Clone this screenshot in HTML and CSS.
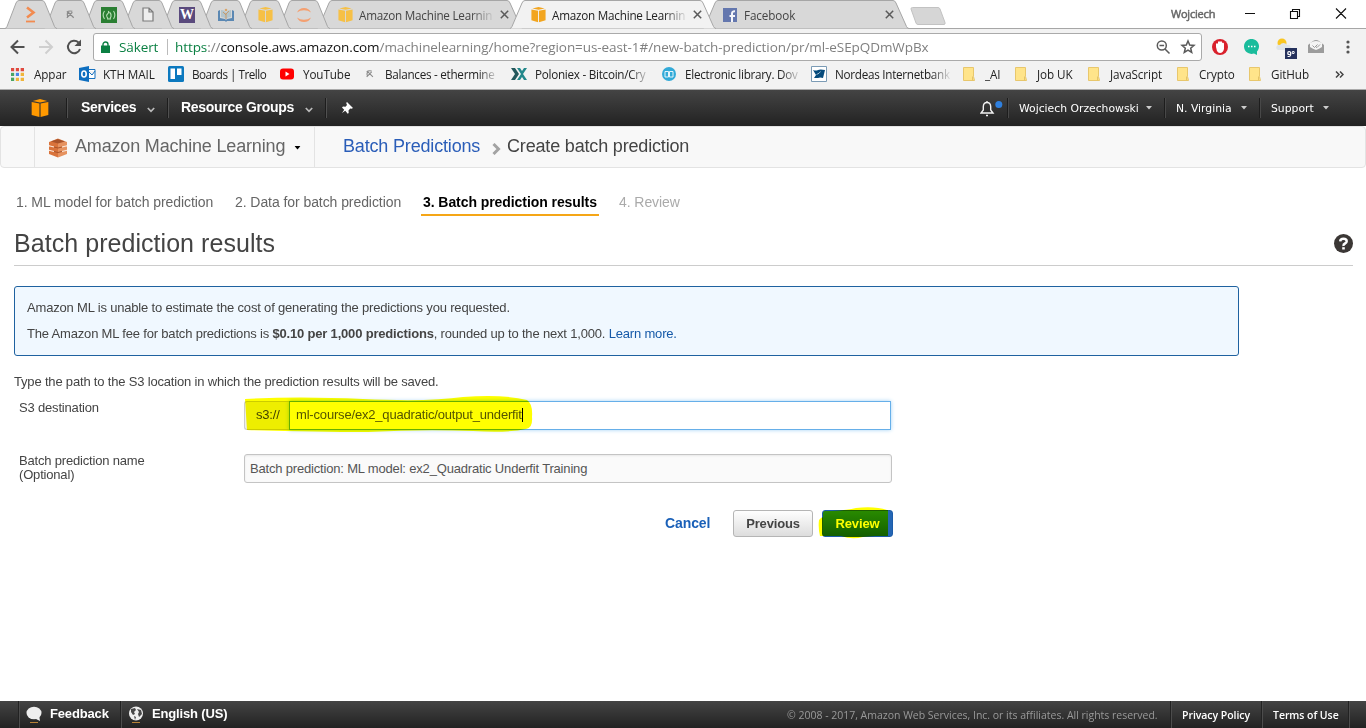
FILE: index.html
```html
<!DOCTYPE html>
<html lang="en">
<head>
<meta charset="utf-8">
<title>Amazon Machine Learning</title>
<link rel="stylesheet" href="styles.css">
</head>
<body>
<svg class="defs" width="0" height="0">
  <defs>
    <symbol id="tab-s" viewBox="0 0 52 29"><path d="M0 28.5Q1.500 28 2 26.500L11 3Q12 .5 14 .5H37Q39 .5 40 3L49.500 26.500Q50.500 28.500 52 28.500" stroke="#a6a6a6"/></symbol>
    <symbol id="tab-l" viewBox="0 0 206 29"><path d="M0 28.5Q1.500 28 2 26.500L12 3Q13 .5 15 .5H190Q192 .5 193 3L203.500 26.500Q204.500 28.500 206 28.500" stroke="#a6a6a6"/></symbol>
    <symbol id="cube" viewBox="0 0 18 18"><path d="M1.500 3.600 8.500 5V17.200L1.500 15.200zM16.500 3.600 9.500 5V17.200L16.500 15.200zM2.500 2.600 9 1l6.500 1.600L9 4z"/></symbol>
    <symbol id="pick" viewBox="0 0 12 12"><path d="M2 3.500Q4 1.500 8 2.500M3 3Q2 6 2.800 8M3.500 3.500 9.500 9.500M8 3.500 2 9.500" fill="none" stroke="#8a8a8a" stroke-width="1.300"/></symbol>
    <symbol id="folder" viewBox="0 0 13 14"><path d="M.5.500H10.500V9.500L11.500 13.500H.5z" fill="#ffe48a" stroke="#e8c76c"/><path d="M9.500 9.500v4" stroke="#e5c468"/></symbol>
    <symbol id="x" viewBox="0 0 9 9"><path d="M.8.800l7.400 7.400M8.200.800.8 8.200" stroke="#5a5a5a" stroke-width="1.500"/></symbol>
    <symbol id="chev" viewBox="0 0 8 6"><path d="M.8 1 4 4.300 7.200 1" fill="none" stroke="#bbb" stroke-width="1.700"/></symbol>
    <symbol id="tri" viewBox="0 0 6 4"><path d="M0 0h6L3 3.500z"/></symbol>
  </defs>
</svg>

<header class="chrome">
  <div class="tabs">
    <div class="tab small z9"><svg class="shape"><use href="#tab-s"/></svg><svg width="12" height="17" viewBox="0 0 12 17"><path d="M2 1.500 8.500 6.500 2 11.500" fill="none" stroke="#f28b50" stroke-width="2.600"/><path d="M1 15.500h9" stroke="#f28b50" stroke-width="1.800"/></svg></div>
    <div class="tab small z8"><svg class="shape"><use href="#tab-s"/></svg><svg width="11" height="11"><use href="#pick"/></svg></div>
    <div class="tab small z7"><svg class="shape"><use href="#tab-s"/></svg><svg width="16" height="16" viewBox="0 0 16 16"><path fill="#2b7f33" d="M0 0h16v16H0z"/><path d="M3.500 4Q.8 8 3.500 12M12.500 4q2.700 4 0 8M7.500 4Q8 6 6.500 7T6 10l1 1.500M8.500 5Q10.500 7 10 9.500L9 11.500M6 12h4" fill="none" stroke="#b8e0b6" stroke-width="1.100"/></svg></div>
    <div class="tab small z6"><svg class="shape"><use href="#tab-s"/></svg><svg width="12" height="15" viewBox="0 0 12 15"><path d="M1 1h6l4 4v9H1zM7 1v4h4" fill="#eee" stroke="#7b7b7b" stroke-width="1.200"/></svg></div>
    <div class="tab small z5"><svg class="shape"><use href="#tab-s"/></svg><span class="wicon">W</span></div>
    <div class="tab small z4"><svg class="shape"><use href="#tab-s"/></svg><svg width="16" height="14" viewBox="0 0 16 14"><path d="M0 3l2-1v8l5 1 1 1 1-1 5-1V2l2 1v10H9l-1 1-1-1H0z" fill="#5b88b3"/><path d="M3 2q4 0 5 3v6q-2-2-5-2zM13 2Q9 2 8 5v6q2-2 5-2z" fill="#b3c5cc"/><path d="M8 11V5M8 7 5 4M8 6l3-3" stroke="#c69a6c"/><circle cx="8" cy="2" r="1.300" fill="#d9a56b"/></svg></div>
    <div class="tab small z3"><svg class="shape"><use href="#tab-s"/></svg><svg class="cube-dim" width="17" height="17"><use href="#cube"/></svg></div>
    <div class="tab small z2"><svg class="shape"><use href="#tab-s"/></svg><svg width="16" height="16" viewBox="0 0 16 16"><path d="M1 5.500Q3 1 8 1T15 5.500Q12 3.200 8 3.200T1 5.500zM1 10.500q2 4.500 7 4.500t7-4.500q-3 2.300-7 2.300T1 10.500z" fill="#f4a071"/></svg></div>
    <div class="tab large z1"><svg class="shape"><use href="#tab-l"/></svg><svg class="cube-dim" width="17" height="17"><use href="#cube"/></svg><span class="tab-title">Amazon Machine Learnin</span><svg class="close" width="9" height="9"><use href="#x"/></svg></div>
    <div class="tab large active"><svg class="shape"><use href="#tab-l"/></svg><svg class="cube-lit" width="17" height="17"><use href="#cube"/></svg><span class="tab-title">Amazon Machine Learnin</span><svg class="close" width="9" height="9"><use href="#x"/></svg></div>
    <div class="tab large z0 fb"><svg class="shape"><use href="#tab-l"/></svg><svg width="14" height="14" viewBox="0 0 14 14"><path fill="#6477ae" d="M0 0h14v14H0z"/><path d="M9 14V5.500q0-2.500 3-2.300M6.500 8H12" fill="none" stroke="#f4f5fa" stroke-width="2"/></svg><span class="tab-title">Facebook</span><svg class="close" width="9" height="9"><use href="#x"/></svg></div>
    <svg class="newtab" width="36" height="18" viewBox="0 0 36 18"><path d="M2.500.5H28q1.500 0 2 1.500l5 13.500q.5 2-1 2H8q-1.500 0-2-1.500L1 2Q.8.5 2.500.5z" fill="#d6d6d6" stroke="#c2c2c2"/></svg>
    <span class="user">Wojciech</span>
    <svg class="win" width="104" height="14" viewBox="0 0 104 14"><path d="M0 6.500h10M45.500 4.500h7v7h-7zM47.500 4.500v-2h7v7h-2M91 1.500l10 10M101 1.500l-10 10" fill="none" stroke="#111" stroke-width="1.100"/></svg>
  </div>

  <div class="toolbar">
    <svg class="navicons" width="72" height="18" viewBox="0 0 72 18"><g fill="none" stroke-width="2"><path d="M14.500 9H2M8 2.500 1.500 9 8 15.500" stroke="#505050"/><path d="M29 9h12.500M35.500 2.500 42 9l-6.500 6.500" stroke="#cfcfcf"/><path d="M68.500 4.500A6.200 6.200 0 1 0 70 11" stroke="#505050"/></g><path d="M71 1.500V8h-6.500z" fill="#505050"/></svg>
    <div class="omnibox">
      <svg width="9" height="12" viewBox="0 0 9 12"><path d="M0 4.500h9V12H0z" fill="#0b8043"/><path d="M2 5V3.500a2.500 2.500 0 0 1 5 0V5" fill="none" stroke="#0b8043" stroke-width="1.400"/></svg>
      <span class="secure">Säkert</span><i></i>
      <span class="url"><em>https</em>://<b>console.aws.amazon.com</b>/machinelearning/home?region=us-east-1#/new-batch-prediction/pr/ml-eSEpQDmWpBx</span>
      <svg class="obicons" width="40" height="16" viewBox="0 0 40 16"><g fill="none" stroke="#5a5a5a" stroke-width="1.500"><circle cx="5.800" cy="6.500" r="4.500"/><path d="M3.500 6.500h4.600M9 10l4.500 4.500"/><path d="M32 2l1.700 4 4.300.4-3.300 2.800 1 4.300L32 11.200l-3.700 2.300 1-4.300L26 6.400l4.300-.4z"/></g></svg>
    </div>
    <div class="ext">
      <svg width="16" height="16" viewBox="0 0 16 16"><circle cx="8" cy="8" r="8" fill="#d9212c"/><path d="M4 8V5l1-1 1 1V3l1-1 1 1 1-1 1 1v1l1-.5 1 1V10q-1 4-4 4-2 0-3-2z" fill="#fff"/></svg>
      <svg width="15" height="16" viewBox="0 0 15 16"><path d="M0 7.500a7.500 7.500 0 1 1 13 5V16L10 14.500A7.500 7.500 0 0 1 0 7.500z" fill="#1abc9c"/><path d="M4 7.500h1.500M7 7.500h1.500M10 7.500h1.500" stroke="#fff" stroke-width="1.500"/></svg>
      <div class="weather"><svg width="16" height="15" viewBox="0 0 16 15"><circle cx="6" cy="6" r="4.500" fill="#f9c623"/><path d="M2 13a2.500 2.500 0 0 1 2-5 4 4 0 0 1 7 0 2.500 2.500 0 0 1 2 5z" fill="#dfe5ea"/></svg><span>9°</span></div>
      <svg width="16" height="13" viewBox="0 0 16 13"><path d="M0 5 5 1q3-2 6 0l5 4v8H0z" fill="#9c9c9c"/><path d="M2 3q6-4 12 0v4q-3 2-6 3Q5 9 2 7z" fill="#f4f4f4"/><path d="M4.500 5.500l2 2 3-3M8 7l1 .5 3-3" fill="none" stroke="#999"/></svg>
      <svg width="4" height="14" viewBox="0 0 4 14"><g fill="#555"><circle cx="2" cy="2" r="1.600"/><circle cx="2" cy="7" r="1.600"/><circle cx="2" cy="12" r="1.600"/></g></svg>
    </div>
  </div>

  <nav class="bookmarks">
    <a class="bm b1"><svg width="13" height="13" viewBox="0 0 14 14"><path d="M0 0h3.400v3.400H0zM5.200 0h3.400v3.400H5.200zM10.400 0H14v3.400h-3.600z" fill="#e04a3f"/><path d="M0 5.200h3.400v3.400H0z" fill="#4aa564"/><path d="M5.200 5.200h3.400v3.400H5.200z" fill="#4b86e8"/><path d="M10.400 5.200H14v3.400h-3.600zM5.200 10.400h3.400V14H5.200zM10.400 10.400H14V14h-3.600z" fill="#f0b53a"/><path d="M0 10.400h3.400V14H0z" fill="#4aa564"/></svg><span>Appar</span></a>
    <a class="bm b2"><svg width="17" height="16" viewBox="0 0 17 16"><path d="M9 3.500h7v9H9zM9 5l4 4 3-4" fill="#fff" stroke="#1570bf"/><path d="M0 2l10-2v16L0 14z" fill="#0f6fc0"/><ellipse cx="5" cy="8" rx="2.200" ry="3" fill="none" stroke="#fff" stroke-width="1.600"/></svg><span>KTH MAIL</span></a>
    <a class="bm b3"><svg width="16" height="16" viewBox="0 0 16 16"><rect width="16" height="16" rx="1.500" fill="#0c79bf"/><path d="M2.500 2.500h4.500v10.500H2.500zM9 2.500h4.500v6.500H9z" fill="#fff"/></svg><span class="tight">Boards | Trello</span></a>
    <a class="bm b4"><svg width="14" height="12" viewBox="0 0 14 12"><rect y=".5" width="14" height="11" rx="3" fill="#f00"/><path d="M5.500 3.500v5l4-2.500z" fill="#fff"/></svg><span>YouTube</span></a>
    <a class="bm b5"><svg width="10" height="10"><use href="#pick"/></svg><span class="fade">Balances - ethermine</span></a>
    <a class="bm b6"><svg width="16" height="14" viewBox="0 0 16 14"><path d="M0 1h4l4 6-4 6H0l4-6z" fill="#23585c"/><path d="M6 1h3l2 3 2-3h3l-4 6 4 6h-3l-2-3-2 3H6l4-6z" fill="#23888b"/></svg><span class="fade">Poloniex - Bitcoin/Cry</span></a>
    <a class="bm b7"><svg width="14" height="14" viewBox="0 0 14 14"><circle cx="7" cy="7" r="7" fill="#32aad8"/><path d="M3 4.500h3.500v5.500H3zM7.500 4.500H11v5.500H7.500z" fill="none" stroke="#e4f5fc"/></svg><span class="fade">Electronic library. Dov</span></a>
    <a class="bm b8"><svg width="16" height="16" viewBox="0 0 16 16"><path d="M.5.5h15v15H.5z" fill="#fff" stroke="#7b9bb5"/><path d="M2 4q3 1 5 0t7 0l-2 8q-3-1-5 0H3l2-3z" fill="#064b7c"/><path d="M5.500 8.500q3-1 4-3" stroke="#fff" fill="none" stroke-width=".6"/></svg><span class="fade">Nordeas Internetbank</span></a>
    <a class="bm b9"><svg width="13" height="14"><use href="#folder"/></svg><span>_AI</span></a>
    <a class="bm b10"><svg width="13" height="14"><use href="#folder"/></svg><span>Job UK</span></a>
    <a class="bm b11"><svg width="13" height="14"><use href="#folder"/></svg><span>JavaScript</span></a>
    <a class="bm b12"><svg width="13" height="14"><use href="#folder"/></svg><span>Crypto</span></a>
    <a class="bm b13"><svg width="13" height="14"><use href="#folder"/></svg><span>GitHub</span></a>
    <svg width="9" height="7" viewBox="0 0 9 7"><path d="M1 .5l3 3-3 3M5 .5l3 3-3 3" fill="none" stroke="#444" stroke-width="1.500"/></svg>
  </nav>
</header>

<nav class="aws">
  <div class="a-logo"><svg width="20" height="20"><use href="#cube"/></svg></div>
  <div class="a-item serv"><span>Services</span><svg width="8" height="6"><use href="#chev"/></svg></div>
  <div class="a-item rg"><span>Resource Groups</span><svg width="8" height="6"><use href="#chev"/></svg></div>
  <div class="a-item pin"><svg width="11" height="12" viewBox="0 0 11 12"><path d="M5 0l6 6-1.500.8-1.300-.3L6.500 8.500l.2 2.500-1 .8L3.300 8.800 0 11l2.200-3.300L0 5.500l1-1 2.500.2L5 3 4.200 1z" fill="#fff"/></svg></div>
  <div class="a-right">
    <div class="bell"><svg width="23" height="17" viewBox="0 0 23 17"><path d="M1 13h12l-2.300-3V6.500Q10.500 2.500 7 2.500T3.300 6.500V10zM6 15.500h2M7 1v1.500" fill="none" stroke="#f2f2f2" stroke-width="1.400"/><circle cx="18.800" cy="4.500" r="3.500" fill="#2f80df"/></svg></div>
    <div class="r-item r1"><span>Wojciech Orzechowski</span><svg width="6" height="4"><use href="#tri"/></svg></div>
    <div class="r-item r2"><span>N. Virginia</span><svg width="6" height="4"><use href="#tri"/></svg></div>
    <div class="r-item r3"><span>Support</span><svg width="6" height="4"><use href="#tri"/></svg></div>
  </div>
</nav>

<div class="sub">
  <div class="sub-home"></div>
  <div class="sub-svc">
    <svg width="20" height="20" viewBox="0 0 20 20"><path d="M1 4l9-3.500V19.500L1 16v-3l1-.5L1 12V8.500L2 8 1 7.500z" fill="#d9733b"/><path d="M19 4l-9-3.500V19.500L19 16v-3l-1-.5 1-.5V8.500L18 8l1-.5z" fill="#e6925f"/><path d="M3 3.500 10 1l7 2.500-7 2z" fill="#a9532a"/><path d="M1 7.800l5 1.200M14 9l5-1.200M1 12.300l5 1.200M14 13.500l5-1.200" stroke="#fbe6d8" fill="none" stroke-width="1.100"/><path d="M6 9l4 1 4-1M6 13.500l4 1 4-1" stroke="#a9532a" fill="none"/></svg>
    <span>Amazon Machine Learning</span><svg width="7" height="4" viewBox="0 0 6 4"><use href="#tri"/></svg>
  </div>
  <div class="crumbs"><a>Batch Predictions</a><svg width="9" height="12" viewBox="0 0 9 12"><path d="M1.500 1l5 5-5 5" fill="none" stroke="#a3a3a3" stroke-width="3"/></svg><span>Create batch prediction</span></div>
</div>

<main>
  <ol class="steps">
    <li class="s1">1. ML model for batch prediction</li>
    <li class="s2">2. Data for batch prediction</li>
    <li class="s3">3. Batch prediction results</li>
    <li class="s4">4. Review</li>
  </ol>
  <div class="title">
    <h1>Batch prediction results</h1>
    <svg width="19" height="19" viewBox="0 0 19 19"><circle cx="9.500" cy="9.500" r="9.500" fill="#3b3735"/><path d="M6.200 7.300Q6.400 4.700 9.500 4.700T12.700 7.200Q12.700 8.700 11 9.500T9.500 12" fill="none" stroke="#fff" stroke-width="2.500"/><path d="M8.200 13.200h2.600v2.300H8.200z" fill="#fff"/></svg>
  </div>
  <section class="info">
    <p class="i1">Amazon ML is unable to estimate the cost of generating the predictions you requested.</p>
    <p class="i2">The Amazon ML fee for batch predictions is <b>$0.10 per 1,000 predictions</b>, rounded up to the next 1,000. <a>Learn more.</a></p>
  </section>
  <p class="hint">Type the path to the S3 location in which the prediction results will be saved.</p>
  <div class="row">
    <label>S3 destination</label>
    <div class="field">
      <span class="prefix">s3://</span><span class="input focus"><span>ml-course/ex2_quadratic/output_underfit</span><i></i></span>
      <svg class="mark" width="294" height="40" viewBox="0 0 294 40"><path d="M2 4Q55 1 120 4 185 7 220 2 260-1 284 5 290 9 289 22 290 33 283 34 265 38 230 36 180 34 125 37 70 37 4 35 3 20 2 4z" fill="#ff0"/></svg>
    </div>
  </div>
  <div class="row second">
    <label>Batch prediction name<br>(Optional)</label>
    <div class="field"><span class="input">Batch prediction: ML model: ex2_Quadratic Underfit Training</span></div>
  </div>
  <div class="actions">
    <a>Cancel</a>
    <button class="prev">Previous</button>
    <div class="review-wrap"><button class="review">Review</button><svg class="mark2" width="74" height="34" viewBox="0 0 74 34"><path d="M1 13Q3 10 6 10 8 4 14 4 30 3 38 1 57-1 69 3H70V28Q57 29 45 30 34 33 23 29H2Q0 21 1 13z" fill="#ff0"/></svg></div>
  </div>
</main>

<footer>
  <div class="f-item fe"><svg width="16" height="18" viewBox="0 0 16 18"><ellipse cx="8" cy="7" rx="7.500" ry="6.300" fill="#eee"/><path d="M8 12l6 3-1-6z" fill="#eee"/><path d="M4 16.500h8" stroke="#b88237"/></svg><span>Feedback</span></div>
  <div class="f-item en"><svg width="16" height="18" viewBox="0 0 16 18"><circle cx="8" cy="7.500" r="7" fill="#eee"/><path d="M3 3l4-1 1 2-2 2 1 2-2 1-2-3zM9 3l4 1 1 4-3 3-1-3 1-2zM6 10l2 1-1 3z" fill="#484848"/><path d="M4 16.500h8" stroke="#b88237"/></svg><span>English (US)</span></div>
  <div class="copy"><span>© 2008 - 2017, Amazon Web Services, Inc. or its affiliates. All rights reserved.</span></div>
  <div class="f-link pp"><span>Privacy Policy</span></div>
  <div class="f-link tu"><span>Terms of Use</span></div>
  <div class="f-end"></div>
</footer>
</body>
</html>
```

FILE: styles.css
```css
* { box-sizing: border-box; }
body { margin: 0; width: 1366px; height: 728px; overflow: hidden; display: flex; flex-direction: column; background: #fff; color: #444; font: 13px "Liberation Sans", Arial, sans-serif; }
svg { display: block; flex: none; }
.defs { position: absolute; }
p, h1, ol { margin: 0; padding: 0; }
span { white-space: nowrap; }

/* browser frame */
.chrome { height: 90px; flex: none; font-family: "Open Sans", sans-serif; background: #f2f2f2; border-bottom: 1px solid #aaa; }
.tabs { height: 29px; display: flex; padding-left: 5px; background: #fff; border-bottom: 1px solid #a6a6a6; }
.tab { position: relative; height: 29px; flex: none; display: flex; align-items: center; margin-right: -13px; fill: #d8d8d8; }
.tab > * { position: relative; }
.tab .shape { position: absolute; left: 0; top: 0; width: 100%; height: 29px; }
.small { width: 52px; justify-content: center; }
.large { width: 206px; padding-left: 20px; }
.z9 { z-index: 9; } .z8 { z-index: 8; } .z7 { z-index: 7; } .z6 { z-index: 6; } .z5 { z-index: 5; } .z4 { z-index: 4; } .z3 { z-index: 3; } .z2 { z-index: 2; } .z1 { z-index: 1; } .z0 { z-index: 0; }
.active { z-index: 10; fill: #f2f2f2; }
.tab .cube-dim { fill: #f6c046; }
.tab .cube-lit { fill: #f2a51f; }
.tab-title { width: 136px; margin-left: 5px; font-size: 11.7px; letter-spacing: -.23px; line-height: 20px; color: #444; -webkit-mask-image: linear-gradient(90deg, #000 112px, transparent 136px); mask-image: linear-gradient(90deg, #000 112px, transparent 136px); }
.active .tab-title { color: #222; }
.close { margin-left: 5px; }
.fb .tab-title { margin-left: 7px; letter-spacing: -.1px; }
.wicon { width: 16px; height: 16px; background: #5a4a7d; color: #fff; font: bold 14px/16px "Liberation Serif", serif; text-align: center; }
.newtab { margin: 7px 0 0 14px; }
.user { margin-left: 225px; width: 74px; padding-top: 6px; font-size: 11px; line-height: 16px; color: #666; letter-spacing: -.2px; -webkit-text-stroke: .5px #666; }
.win { margin-top: 7px; }
.toolbar { height: 34px; display: flex; align-items: center; padding: 1px 0 0 10px; }
.navicons { width: 72px; }
.omnibox { width: 1109px; height: 28px; margin-left: 11px; display: flex; align-items: center; background: #fff; border: 1px solid #aaa; border-radius: 3px; padding-left: 7px; font-size: 13.5px; }
.secure { margin-left: 9px; width: 48px; color: #0b8043; letter-spacing: -.1px; }
.omnibox i { width: 1px; height: 16px; background: #bbb; margin-right: 7px; }
.url { width: 981px; color: #808080; letter-spacing: -.077px; }
.url em { font-style: normal; color: #0b8043; }
.url b { font-weight: 400; color: #111; }
.ext { display: flex; align-items: center; margin-left: 10px; }
.ext > :nth-child(2) { margin-left: 16px; }
.weather { position: relative; margin-left: 17px; width: 22px; height: 20px; }
.weather span { position: absolute; left: 9px; top: 11px; width: 12px; height: 11px; background: #25315c; color: #fff; font-size: 8px; line-height: 11px; text-align: center; font-weight: 700; }
.ext > :nth-child(4) { margin-left: 10px; }
.ext > :nth-child(5) { margin-left: 22px; }
.bookmarks { height: 24px; display: flex; align-items: center; margin-top: -1px; padding-left: 11px; font-size: 11.7px; color: #222; }
.bm { display: flex; align-items: center; flex: none; }
.bm span { line-height: 20px; letter-spacing: -.1px; }
.bm .tight { letter-spacing: -.5px; }
.bm .fade { letter-spacing: -.27px; -webkit-mask-image: linear-gradient(90deg, #000 82%, transparent); mask-image: linear-gradient(90deg, #000 82%, transparent); }
.b1 { width: 68px; } .b1 span { margin-left: 10px; }
.b2 { width: 89px; } .b2 span { margin-left: 7px; }
.b3 { width: 112px; } .b3 span { margin-left: 8px; }
.b4 { width: 85px; } .b4 span { margin-left: 9px; }
.b5 { width: 146px; } .b5 span { margin-left: 10px; width: 114px; }
.b6 { width: 151px; } .b6 span { margin-left: 8px; width: 116px; }
.b7 { width: 149px; } .b7 span { margin-left: 9px; width: 117px; }
.b8 { width: 152px; } .b8 span { margin-left: 8px; width: 117px; }
.b9 { width: 52px; } .b9 span { margin-left: 9px; }
.b10 { width: 73px; } .b10 span { margin-left: 9px; }
.b11 { width: 89px; } .b11 span { margin-left: 9px; }
.b12 { width: 72px; } .b12 span { margin-left: 9px; }
.b13 { width: 86px; } .b13 span { margin-left: 9px; }

/* console bar */
.aws { height: 36px; flex: none; display: flex; align-items: center; background: linear-gradient(#444, #222); color: #fff; }
.a-logo { width: 66px; padding-left: 30px; fill: #f90; }
.a-item { height: 20px; display: flex; align-items: center; border-left: 1px solid #1d1d1d; box-shadow: inset 1px 0 #505050; padding-left: 14px; font-weight: 700; font-size: 14px; line-height: 16px; letter-spacing: -.3px; }
.a-item span { margin-top: -2px; }
.a-item svg { margin-top: 3px; }
.serv { width: 101px; } .serv span { width: 66px; }
.rg { width: 158px; padding-left: 13px; } .rg span { width: 124px; }
.a-item.pin { padding-left: 16px; }
.pin svg { margin-top: 0; }
.a-right { margin-left: auto; display: flex; align-items: center; font: 10.8px "DejaVu Sans", sans-serif; fill: #ccc; padding-right: 25px; }
.r-item span { margin-top: 1px; }
.bell { width: 27px; }
.r-item { height: 20px; display: flex; align-items: center; justify-content: space-between; border-left: 1px solid #1d1d1d; box-shadow: inset 1px 0 #484848; padding: 0 12px 0 11px; }
.r1 { width: 157px; } .r2 { width: 95px; } .r3 { width: 82px; }
.sub { height: 42px; flex: none; display: flex; background: #f8f8f8; border: 1px solid #e3e3e3; border-radius: 4px; font-size: 18px; line-height: 38px; letter-spacing: -.17px; }
.sub-home { width: 33px; }
.sub-svc { width: 281px; display: flex; align-items: center; border: solid #e3e3e3; border-width: 0 1px; padding: 1px 0 0 13px; color: #666; }
.sub-svc span { margin: -3px 0 0 7px; width: 219px; }
.crumbs { display: flex; align-items: center; padding-left: 28px; color: #444; }
.crumbs a, .crumbs span { margin-top: -2px; white-space: nowrap; }
.crumbs a { width: 149px; color: #2a5db8; }
.crumbs svg { margin: 3px 0 0; }
.crumbs span { margin-left: 6px; }

/* wizard */
main { flex: 1; padding: 23px 13px 0 14px; letter-spacing: -.18px; }
.steps { display: flex; list-style: none; font-size: 14px; line-height: 22px; color: #666; height: 25px; letter-spacing: -.07px; }
.steps li { white-space: nowrap; }
.s1 { width: 219px; padding-left: 2px; } .s2 { width: 188px; padding-left: 2px; }
.s3 { width: 178px; padding-left: 2px; font-weight: 700; color: #000; border-bottom: 2px solid #f5a617; }
.s4 { padding-left: 20px; color: #aaa; }
.title { display: flex; justify-content: space-between; align-items: center; height: 50px; border-bottom: 1px solid #ccc; }
h1 { font-size: 25px; line-height: 28px; font-weight: 400; margin-top: 4px; letter-spacing: .05px; }
.title svg { margin-top: 5px; }
.info { width: 1225px; height: 70px; margin-top: 20px; border: 1px solid #1f62a0; border-radius: 3px; background: #f0f8ff; padding: 8px 12px; line-height: 26px; }
.info p { white-space: nowrap; }
.info a { color: #1559a8; }
.hint { margin-top: 18px; line-height: 16px; }
.row { display: flex; margin-top: 11px; padding-left: 5px; }
.row label { width: 225px; line-height: 14px; }
.field { position: relative; display: flex; height: 29px; width: 648px; }
.prefix { width: 45px; background: #eee; border: 1px solid #ccc; border-right: 0; border-radius: 3px 0 0 3px; padding-left: 11px; line-height: 26px; }
.input { flex: 1; display: flex; align-items: center; border: 1px solid #c4c4c4; border-radius: 3px; padding-left: 5px; background: #fafafa; color: #555; box-shadow: inset 0 1px 2px #e8e8e8; }
.focus { flex: none; width: 602px; background: #fff; border-color: #66afe9; border-radius: 0; box-shadow: 0 0 4px #9fd0f5; padding-left: 6px; padding-bottom: 2px; }
.focus i { width: 1px; height: 14px; background: #000; }
.mark { position: absolute; left: -1px; top: -6px; mix-blend-mode: multiply; }
.second { margin-top: 24px; }
.actions { display: flex; margin-top: 27px; padding-left: 651px; align-items: flex-start; letter-spacing: 0; }
.actions a { width: 68px; line-height: 27px; font-size: 14px; font-weight: 700; color: #1a60b8; letter-spacing: -.1px; }
button { height: 27px; padding: 0; font: bold 13px "Liberation Sans", Arial, sans-serif; letter-spacing: -.15px; border-radius: 3px; }
.prev { width: 80px; border: 1px solid #b5b5b5; background: linear-gradient(#fefefe, #ddd); color: #444; }
.review-wrap { position: relative; margin-left: 9px; }
.review { width: 71px; border: 1px solid #1c5ca8; background: linear-gradient(90deg, transparent 65px, #2466b5 65px), linear-gradient(#298a08, #146000); color: #ff0; }
.mark2 { position: absolute; left: -4px; top: -3px; mix-blend-mode: multiply; }

/* footer */
footer { height: 27px; flex: none; display: flex; align-items: center; background: linear-gradient(#444, #222); color: #fff; padding-left: 18px; font-weight: 700; }
footer > div { height: 27px; display: flex; align-items: center; border-left: 1px solid #222; box-shadow: inset 1px 0 #4c4c4c; }
.f-item { padding-left: 7px; letter-spacing: -.15px; }
.f-item span { margin-left: 8px; margin-top: -2px; }
.fe { width: 102px; } .en { width: 117px; }
footer .copy { margin-left: auto; border: 0; box-shadow: none; width: 383px; font: 10.5px "Open Sans", sans-serif; color: #999; letter-spacing: -.01px; }
footer .f-link { font: 600 10.5px "Open Sans", sans-serif; padding-left: 11px; letter-spacing: -.05px; }
.pp { width: 91px; } .tu { width: 87px; }
.f-end { width: 18px; }
```
